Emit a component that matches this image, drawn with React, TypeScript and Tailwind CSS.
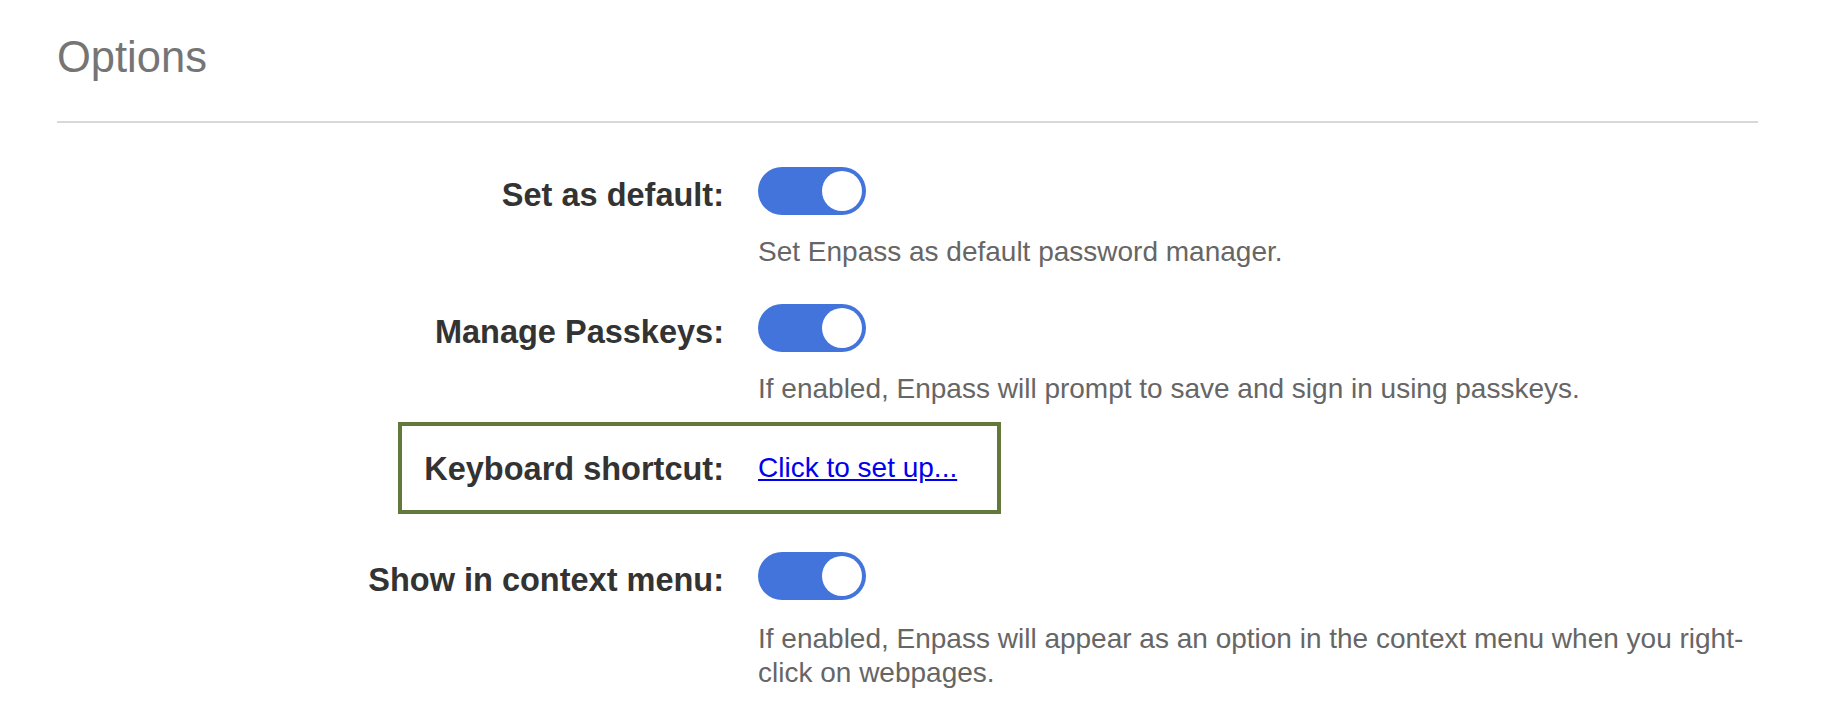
import React, { useState } from 'react';

type Option = {
  key: string;
  label: string;
  description: string;
};

const toggleOptions: Record<string, Option> = {
  setDefault: {
    key: 'setDefault',
    label: 'Set as default:',
    description: 'Set Enpass as default password manager.',
  },
  passkeys: {
    key: 'passkeys',
    label: 'Manage Passkeys:',
    description: 'If enabled, Enpass will prompt to save and sign in using passkeys.',
  },
  contextMenu: {
    key: 'contextMenu',
    label: 'Show in context menu:',
    description:
      'If enabled, Enpass will appear as an option in the context menu when you right-click on webpages.',
  },
};

function Toggle({ on, onChange }: { on: boolean; onChange: () => void }) {
  return (
    <button
      type="button"
      onClick={onChange}
      className={`flex h-[48px] w-[108px] items-center rounded-full p-[4px] ${
        on ? 'justify-end bg-[#4274db]' : 'justify-start bg-[#cfcfcf]'
      }`}
    >
      <span className="block h-[40px] w-[40px] rounded-full bg-white" />
    </button>
  );
}

function ToggleRow({
  option,
  on,
  onChange,
  className,
  descClassName,
}: {
  option: Option;
  on: boolean;
  onChange: () => void;
  className?: string;
  descClassName?: string;
}) {
  return (
    <div className={`flex ${className ?? ''}`}>
      {/* label column, right aligned */}
      <div className="w-[667px] shrink-0 pt-[4px] text-right text-[32.5px] font-bold leading-[48px] text-[#333333]">
        {option.label}
      </div>
      <div className="ml-[34px] flex-1">
        <Toggle on={on} onChange={onChange} />
        <p className={`text-[28px] leading-[34px] text-[#666666] ${descClassName ?? 'mt-[20px]'}`}>
          {option.description}
        </p>
      </div>
    </div>
  );
}

export default function App() {
  const [values, setValues] = useState<Record<string, boolean>>({
    setDefault: true,
    passkeys: true,
    contextMenu: true,
  });

  const flip = (key: string) => setValues((v) => ({ ...v, [key]: !v[key] }));

  return (
    <div
      className="min-h-screen w-full bg-white pl-[57px] pr-[64px] pt-[33px]"
      style={{ fontFamily: '"Liberation Sans", Arial, Helvetica, sans-serif' }}
    >
      {/* Header */}
      <h1 className="text-[43.5px] font-normal leading-[49px] text-[#757575]">Options</h1>
      <div className="mt-[39px] h-[2px] w-full bg-[#d8d8d8]" />

      {/* Settings */}
      <div className="flex flex-col">
        <ToggleRow
          className="mt-[44px]"
          option={toggleOptions.setDefault}
          on={values.setDefault}
          onChange={() => flip('setDefault')}
        />
        <ToggleRow
          className="mt-[35px]"
          option={toggleOptions.passkeys}
          on={values.passkeys}
          onChange={() => flip('passkeys')}
        />

        {/* Keyboard shortcut, outlined */}
        <div className="ml-[341px] mt-[16px] flex h-[92px] w-[603px] items-center border-4 border-[#62793b]">
          <div className="w-[322px] shrink-0 pt-[2px] text-right text-[32.5px] font-bold leading-[82px] text-[#333333]">
            Keyboard shortcut:
          </div>
          <a
            href="#"
            onClick={(e) => e.preventDefault()}
            className="ml-[34px] text-[28px] leading-[82px] text-[#0000ee] underline"
          >
            Click to set up...
          </a>
        </div>

        <ToggleRow
          className="mt-[38px]"
          descClassName="mt-[22px]"
          option={toggleOptions.contextMenu}
          on={values.contextMenu}
          onChange={() => flip('contextMenu')}
        />
      </div>
    </div>
  );
}
